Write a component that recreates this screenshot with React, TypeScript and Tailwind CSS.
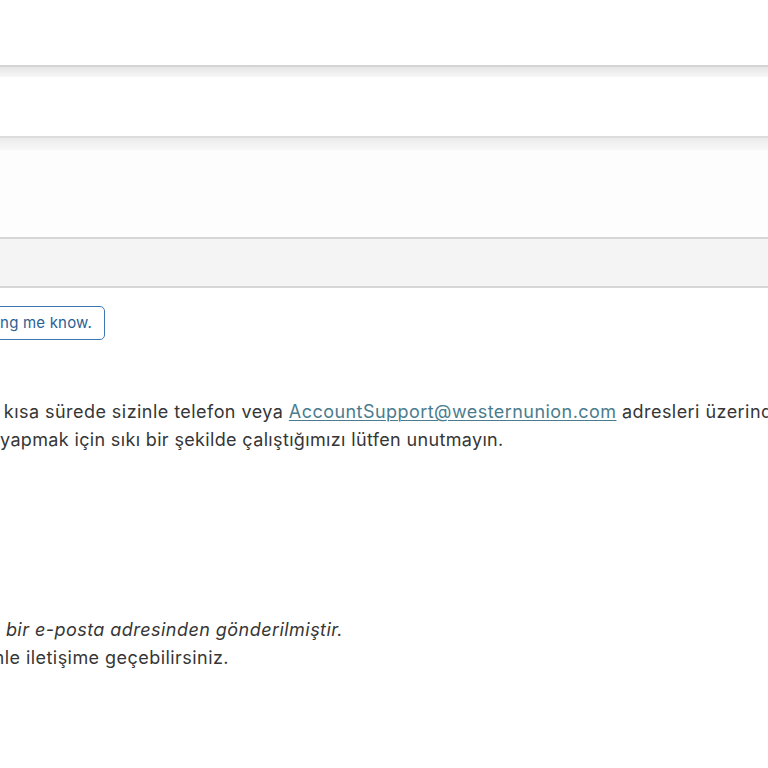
export default function App() {
  return (
    <div className="w-[768px] h-[768px] overflow-hidden bg-white text-[#363636]" style={{ fontFamily: 'Inter, "Noto Sans", sans-serif' }}>
      <div className="h-[65px]" />
      <div className="h-[12px] border-t-2 border-[#d4d4d4] bg-gradient-to-b from-[#e6e6e6] to-[#f7f7f7]" />
      <div className="h-[59px]" />
      <div className="h-[14px] border-t-2 border-[#dcdcdc] bg-gradient-to-b from-[#ebebeb] to-[#f8f8f8]" />
      <div className="h-[87px] bg-[#fdfdfd]" />
      <div className="h-[51px] border-y-2 border-[#d6d6d6] bg-[#f4f4f4]" />

      <div className="mt-[18px] flex w-[105px] justify-end">
        <button className="shrink-0 h-[34px] px-[12px] rounded-[5px] border-[1.5px] border-[#3b78b4] bg-white text-[15px] tracking-[0.2px] text-[#2b5f94] whitespace-nowrap">
          Thanks for letting me know.
        </button>
      </div>

      <div className="mt-[58px] text-[18px] tracking-[0.45px] leading-[28px] whitespace-nowrap">
        <div className="-ml-[24px]">
          En kısa sürede sizinle telefon veya{" "}
          <a className="text-[#4a7c8e] underline underline-offset-2 decoration-1">AccountSupport@westernunion.com</a>{" "}
          adresleri üzerinden iletişime geçeceğiz.
        </div>
        <div className="tracking-[0.35px]">yapmak için sıkı bir şekilde çalıştığımızı lütfen unutmayın.</div>
      </div>

      <div className="mt-[162px] text-[18px] tracking-[0.45px] leading-[28px] whitespace-nowrap">
        <div className="flex w-[343px] justify-end">
          <span className="shrink-0 italic">Bu e-posta izlenmeyen bir e-posta adresinden gönderilmiştir.</span>
        </div>
        <div className="flex w-[229px] justify-end">
          <span className="shrink-0">Bizimle iletişime geçebilirsiniz.</span>
        </div>
      </div>
    </div>
  );
}
